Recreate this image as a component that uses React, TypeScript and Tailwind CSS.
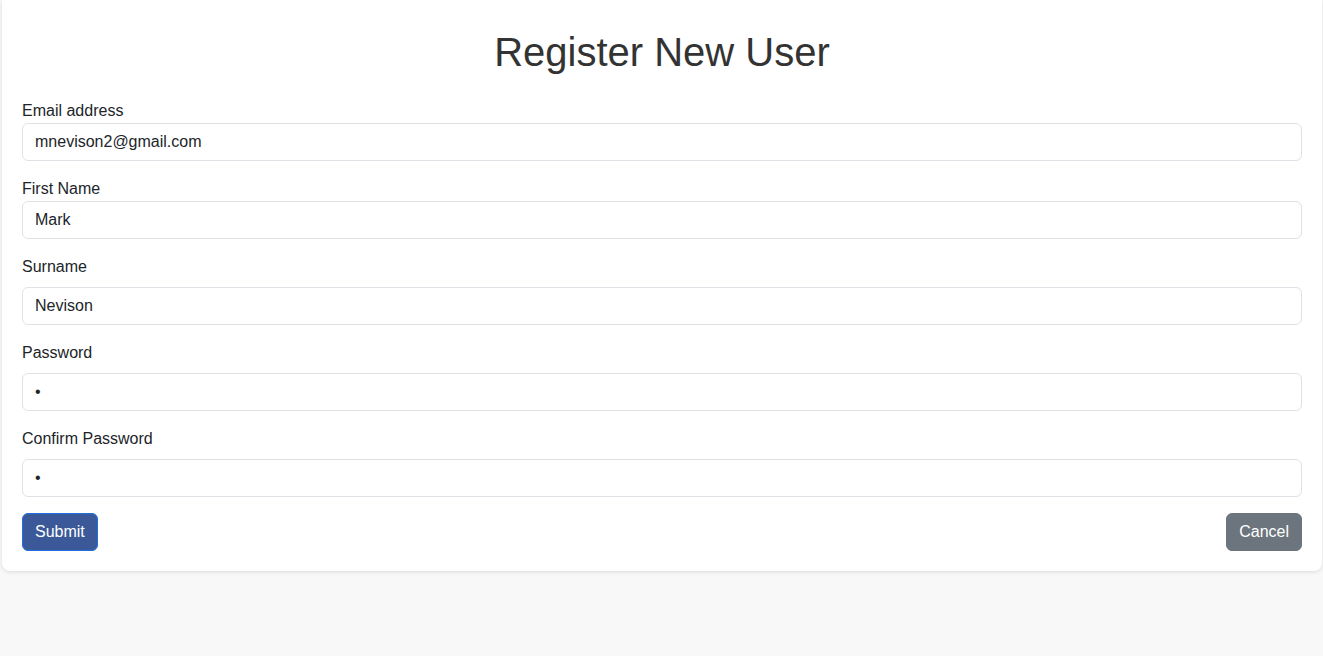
import type { FC } from 'react';

const font = { fontFamily: '"Liberation Sans", Arial, sans-serif' };

const Field: FC<{ label: string; value: string; type?: string; gap?: boolean }> = ({ label, value, type = 'text', gap }) => (
  <div className="mb-4">
    <label className={`block text-base leading-6 text-[#212529] ${gap ? 'mb-2' : ''}`}>{label}</label>
    <input
      type={type}
      value={value}
      readOnly
      className="block w-full h-[38px] px-3 rounded-md border border-[#dee2e6] bg-white text-base text-[#212529] outline-none"
    />
  </div>
);

export default function App() {
  return (
    <div className="min-h-[656px] bg-[#f8f8f8]" style={font}>
      <div className="ml-[2px] mr-px bg-white rounded-b-lg shadow-[0_1px_4px_rgba(0,0,0,0.12)] px-5 pt-7 pb-5">
        <h1 className="text-center text-[40px] leading-[48px] text-[#333333] mb-[23px]">Register New User</h1>

        <Field label="Email address" value="mnevison2@gmail.com" type="email" />
        <Field label="First Name" value="Mark" />
        <Field label="Surname" value="Nevison" gap />
        <Field label="Password" value="a" type="password" gap />
        <Field label="Confirm Password" value="a" type="password" gap />

        <div className="flex justify-between">
          <button className="h-[38px] px-3 rounded-md border border-[#1f6fe0] bg-[#3b5998] text-base text-white">
            Submit
          </button>
          <button className="h-[38px] px-3 rounded-md border border-[#6c757d] bg-[#6c757d] text-base text-white">
            Cancel
          </button>
        </div>
      </div>
    </div>
  );
}
